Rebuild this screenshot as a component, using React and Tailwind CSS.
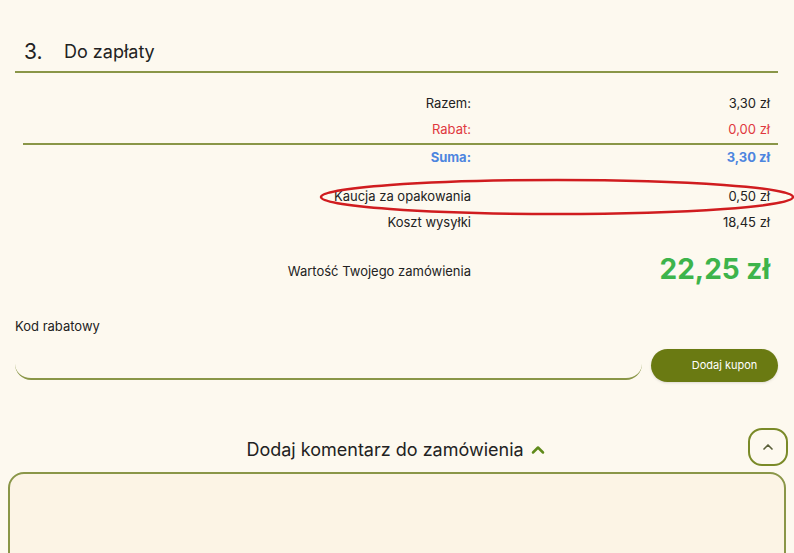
import { ChevronUp } from "lucide-react"

const Row = ({ label, value, className = "" }) => (
  <div className={`flex items-center h-[26px] text-[13px] ${className}`}>
    <div className="w-[456px] text-right">{label}</div>
    <div className="flex-1 text-right pr-[8px]">{value}</div>
  </div>
)

const App = () => {
  return (
    <div
      className="w-[794px] h-[553px] overflow-hidden bg-[#fdf9ef] text-[#222]"
      style={{ fontFamily: "Inter, 'Noto Sans', sans-serif" }}
    >
      <div className="pl-[15px] pr-[16px]">
        <div className="relative">
          <div className="flex items-center h-[73px] pt-[32px] pl-[9px] border-b-2 border-[#8a9648]">
            <span className="text-[21px] w-[40px]">3.</span>
            <span className="text-[18px]">Do zapłaty</span>
          </div>

          <div className="pt-[18px]">
            <Row label="Razem:" value="3,30 zł" />
            <Row label="Rabat:" value="0,00 zł" className="text-[#e0383e]" />
            <div className="ml-[8px] border-b-2 border-[#8a9648]" />
            <Row label="Suma:" value="3,30 zł" className="text-[#4d86df] font-bold" />
            <div className="h-[13px]" />
            <Row label="Kaucja za opakowania" value="0,50 zł" />
            <Row label="Koszt wysyłki" value="18,45 zł" />
            <div className="flex items-center h-[50px] mt-[11px]">
              <div className="w-[456px] text-right text-[13px]">Wartość Twojego zamówienia</div>
              <div className="flex-1 text-right pr-[8px] text-[28px] font-bold text-[#3db44b] leading-none pb-[6px]">
                22,25 zł
              </div>
            </div>
          </div>

          <svg
            className="absolute left-[304px] top-[177px] pointer-events-none"
            width="476"
            height="40"
            viewBox="0 0 476 40"
          >
            <ellipse cx="238" cy="20" rx="236" ry="17" fill="none" stroke="#d01c1f" strokeWidth="2.5" />
          </svg>
        </div>

        <div className="pt-[20px]">
          <div className="text-[13px]">Kod rabatowy</div>
          <div className="flex items-end mt-[7px]">
            <div className="w-[627px] h-[36px] rounded-2xl border-b-2 border-[#8a9648]" />
            <button className="ml-[9px] flex-1 h-[33px] mb-[-2px] rounded-full bg-[#6a7a12] text-white text-[11px] pl-[20px] shadow-sm">
              Dodaj kupon
            </button>
          </div>
        </div>
      </div>

      <div className="px-[8px] pt-[50px]">
        <div className="relative flex items-center justify-center h-[40px]">
          <span className="text-[18px]">Dodaj komentarz do zamówienia</span>
          <ChevronUp className="ml-[4px] w-[20px] h-[20px] text-[#5f8a1a]" strokeWidth={3} />
          <div className="absolute right-[-2px] top-[-2px] w-[40px] h-[38px] rounded-[14px] border-2 border-[#7a8a28] flex items-center justify-center">
            <ChevronUp className="w-[16px] h-[16px] text-[#5a5f3a]" strokeWidth={2.5} />
          </div>
        </div>
        <div className="mt-[2px] h-[100px] rounded-2xl border-2 border-[#8a9648] bg-[#fcf4e5]" />
      </div>
    </div>
  )
}

export default App
